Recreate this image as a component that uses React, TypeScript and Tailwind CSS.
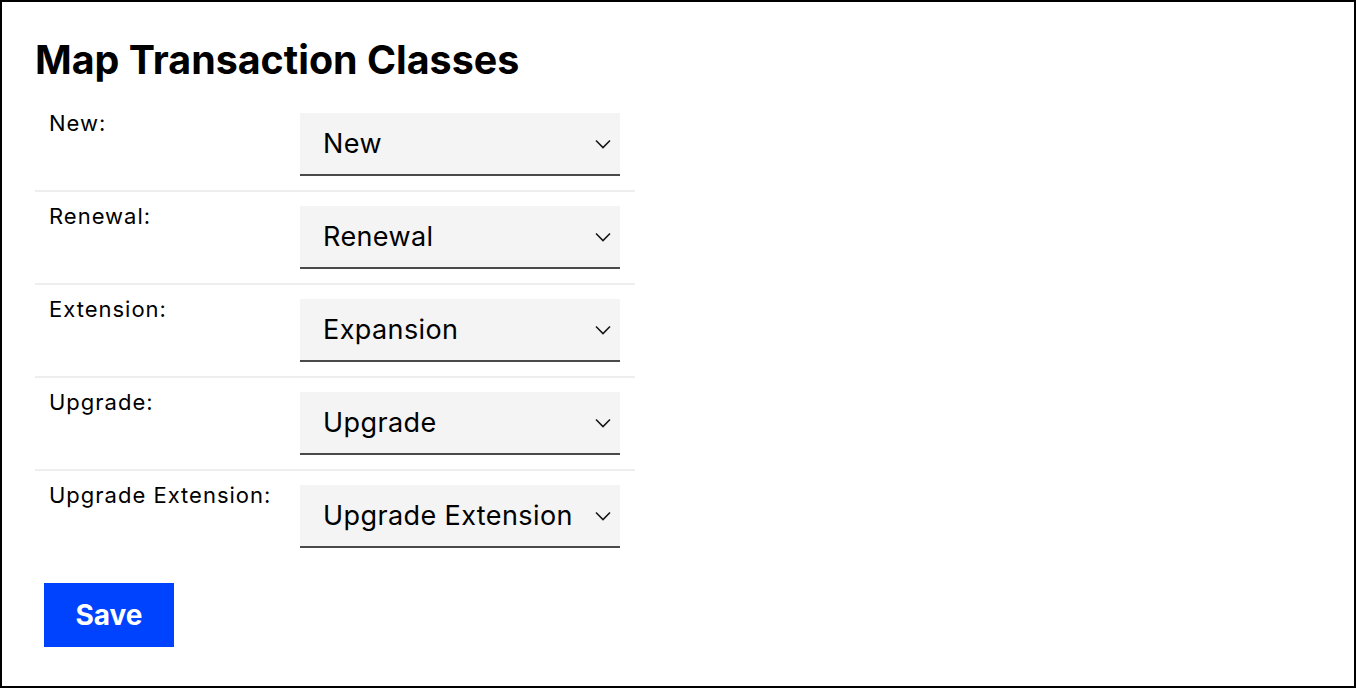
const rows = [
  { label: 'New:', value: 'New' },
  { label: 'Renewal:', value: 'Renewal' },
  { label: 'Extension:', value: 'Expansion' },
  { label: 'Upgrade:', value: 'Upgrade' },
  { label: 'Upgrade Extension:', value: 'Upgrade Extension' },
]

function Chevron() {
  return (
    <svg width="16" height="10" viewBox="0 0 16 10" fill="none" className="shrink-0">
      <path d="M1 1.5 L8 8.5 L15 1.5" stroke="#161616" strokeWidth="1.6" />
    </svg>
  )
}

function SelectBox({ value }: { value: string }) {
  return (
    <div className="flex h-[63px] w-[320px] items-center justify-between border-b-2 border-[#4a4a4a] bg-[#f4f4f4] pl-[23px] pr-[9px]">
      <span className="text-[27px] leading-none tracking-[0.4px] text-black">{value}</span>
      <Chevron />
    </div>
  )
}

export default function App() {
  return (
    <div
      className="h-[688px] w-[1356px] border-2 border-black bg-white pl-[33px] pt-[34px] text-black"
      style={{ fontFamily: 'Inter, "Noto Sans", sans-serif' }}
    >
      <h1 className="text-[39.4px] font-bold leading-[48px]">Map Transaction Classes</h1>
      <div className="mt-[15px] w-[600px]">
        {rows.map((r, i) => (
          <div
            key={r.label}
            className={`flex py-[14px] ${i < rows.length - 1 ? 'border-b-2 border-[#eeeeee]' : ''}`}
          >
            <div className="w-[265px] pl-[14px] text-[22px] leading-[20px] tracking-[1px]">{r.label}</div>
            <SelectBox value={r.value} />
          </div>
        ))}
      </div>
      <button className="ml-[9px] mt-[21px] flex h-[64px] w-[130px] items-center justify-center bg-[#0043ff] text-[28px] font-bold text-white">
        Save
      </button>
    </div>
  )
}
